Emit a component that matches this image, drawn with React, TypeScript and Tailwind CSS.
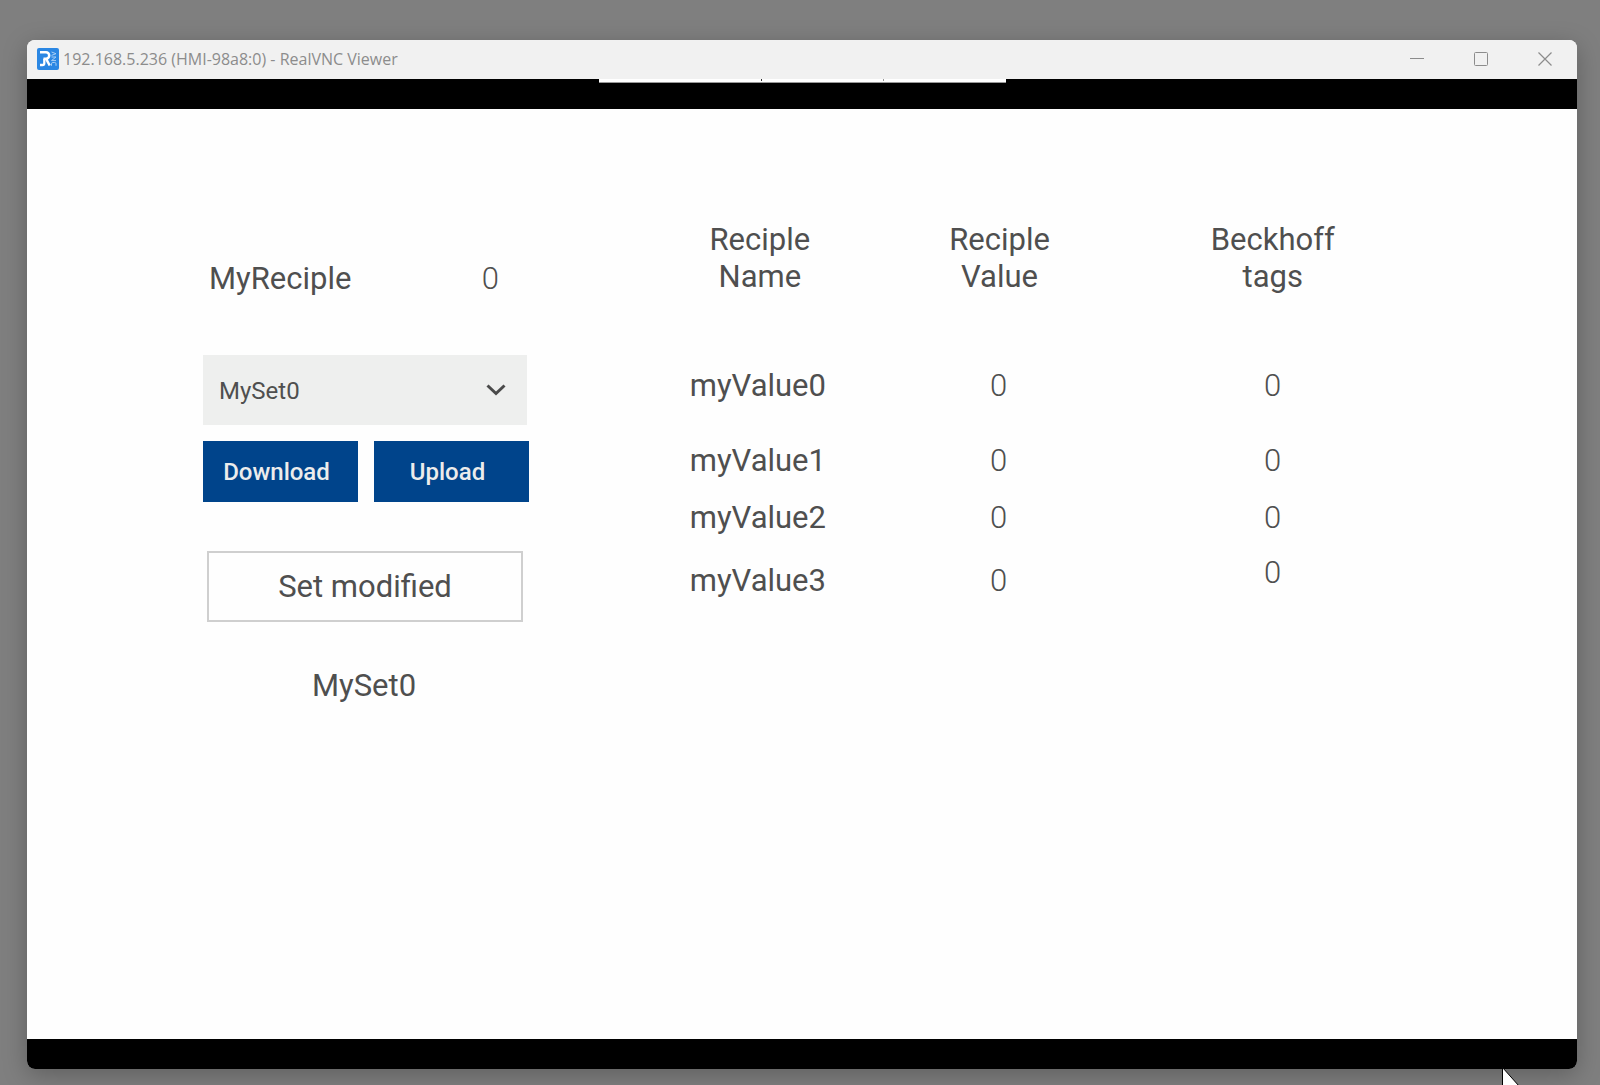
import { useState } from 'react';

const rows = [
    { name: 'myValue0', value: 0, tag: 0, height: 'h-[78px]', tagPad: '' },
    { name: 'myValue1', value: 0, tag: 0, height: 'h-[72px]', tagPad: '' },
    { name: 'myValue2', value: 0, tag: 0, height: 'h-[42px]', tagPad: '' },
    { name: 'myValue3', value: 0, tag: 0, height: 'h-[84px]', tagPad: 'pb-4' },
];

function TitleBar() {
    return (
        <header className="flex h-[39px] items-center bg-[#f1f1f1] pb-0.5 pl-2.5 font-['Open_Sans',sans-serif] text-[#8c8c8c]">
            <svg viewBox="0 0 22 22" className="h-[22px] w-[22px]" aria-hidden="true">
                <rect width="22" height="22" rx="2" fill="#2b87e3" />
                <path d="M3 4.300h6a3.200 3.200 0 0 1 0 6.400H6.500M9 10.700l3.700 6.800" fill="none" stroke="#fff" strokeWidth="2.5" />
                <path d="M3 17h2.500q1.800 0 1.800-1.800v-4.500" fill="none" stroke="#fff" strokeWidth="2.3" />
                <path d="M14.500 4l4.500 1.700-4.500 1.700M14.500 9h4.500l-4.500 3.600h4.500M14.500 17.800v-2q0-1.300 1.300-1.300h1.900q1.300 0 1.300 1.300v2" fill="none" stroke="#a9cff5" strokeWidth="1" />
            </svg>
            <h1 className="ml-1 flex-1 text-base">192.168.5.236 (HMI-98a8:0) - RealVNC Viewer</h1>
            <button type="button" aria-label="Minimize" className="flex h-full w-16 items-center justify-center">
                <svg viewBox="0 0 14 14" className="h-3.5 w-3.5" stroke="currentColor">
                    <path d="M0 6.5h14" />
                </svg>
            </button>
            <button type="button" aria-label="Maximize" className="flex h-full w-16 items-center justify-center">
                <svg viewBox="0 0 14 14" className="h-3.5 w-3.5" fill="none" stroke="currentColor">
                    <rect x="0.5" y="0.5" width="13" height="13" rx="1" />
                </svg>
            </button>
            <button type="button" aria-label="Close" className="flex h-full w-16 items-center justify-center">
                <svg viewBox="0 0 14 14" className="h-3.5 w-3.5" stroke="currentColor" strokeWidth="1.2">
                    <path d="M0.5 0.5l13 13M13.5 0.5l-13 13" />
                </svg>
            </button>
        </header>
    );
}

function RecipePanel() {
    const [set, setSet] = useState('MySet0');

    return (
        <section className="w-[326px] shrink-0 pt-[151px]">
            <div className="flex justify-between pl-1.5 pr-[30px]">
                <span>MyReciple</span>
                <span className="font-light">0</span>
            </div>

            <div className="relative mt-[58px] mr-0.5">
                <select
                    aria-label="Recipe set"
                    value={set}
                    onChange={(e) => setSet(e.target.value)}
                    className="h-[70px] w-full appearance-none bg-[#eeefee] px-4 pt-0.5 text-2xl"
                >
                    <option>MySet0</option>
                </select>
                <svg viewBox="0 0 20 12" className="pointer-events-none absolute top-[29px] right-[21px] h-3 w-5" fill="none" stroke="#4a4a4a" strokeWidth="3">
                    <path d="M1.5 1.5L10 9.5l8.500-8" />
                </svg>
            </div>

            <div className="mt-4 grid grid-cols-2 gap-4 text-2xl font-medium text-[#ececec]">
                <button type="button" className="h-[61px] bg-[#00448b] pr-2">Download</button>
                <button type="button" className="h-[61px] bg-[#00448b] pr-2">Upload</button>
            </div>

            <div className="mx-1 mt-[49px] mr-1.5 flex h-[71px] items-center justify-center border-2 border-[#cfcfcf]">
                Set modified
            </div>
            <p className="mt-[45px] pr-1 text-center">{set}</p>
        </section>
    );
}

function RecipeTable() {
    return (
        <table className="mt-28 w-full table-fixed self-start text-center">
            <colgroup>
                <col className="w-[30.5%]" />
                <col className="w-[30.5%]" />
                <col className="w-[39%]" />
            </colgroup>
            <thead>
                <tr className="h-[125px] align-top">
                    <th className="p-0 font-normal">Reciple<br />Name</th>
                    <th className="p-0 font-normal">Reciple<br />Value</th>
                    <th className="p-0 font-normal">Beckhoff<br />tags</th>
                </tr>
            </thead>
            <tbody>
                {rows.map((row) => (
                    <tr key={row.name} className={row.height}>
                        <td className="p-0 pr-1">{row.name}</td>
                        <td className="p-0 pr-0.5 font-light">{row.value}</td>
                        <td className={`p-0 font-light ${row.tagPad}`}>{row.tag}</td>
                    </tr>
                ))}
            </tbody>
        </table>
    );
}

function App() {
    return (
        <div className="relative flex min-h-screen flex-col overflow-hidden bg-[#7f7f7f] pt-10 pr-[23px] pb-4 pl-[27px]">
            <main className="flex flex-1 flex-col overflow-hidden rounded-lg bg-[#fefefe] shadow-[0_6px_24px_rgba(0,0,0,0.25)]">
                <TitleBar />
                <div className="h-[30px] bg-black">
                    {/* Collapsed viewer toolbar */}
                    <div className="mx-auto flex h-1 w-[407px] justify-center gap-[121px] border-b border-[#999] bg-white pl-10">
                        <span className="h-0.5 w-px bg-[#333]" />
                        <span className="h-0.5 w-px bg-[#999]" />
                    </div>
                </div>
                <div className="flex flex-1 gap-[111px] pr-[151px] pl-44 font-[Roboto,sans-serif] text-[31px] leading-[37px] text-[#4f4f4f]">
                    <RecipePanel />
                    <RecipeTable />
                </div>
                <div className="h-[30px] bg-black" />
            </main>

            {/* Mouse pointer */}
            <svg viewBox="0 0 18 26" className="pointer-events-none absolute right-20 -bottom-2 h-[26px] w-[18px]" aria-hidden="true">
                <path d="M0.500 0.500v24l5.500-5.500h11z" fill="#fff" stroke="#000" />
            </svg>
        </div>
    );
}

export default App;
